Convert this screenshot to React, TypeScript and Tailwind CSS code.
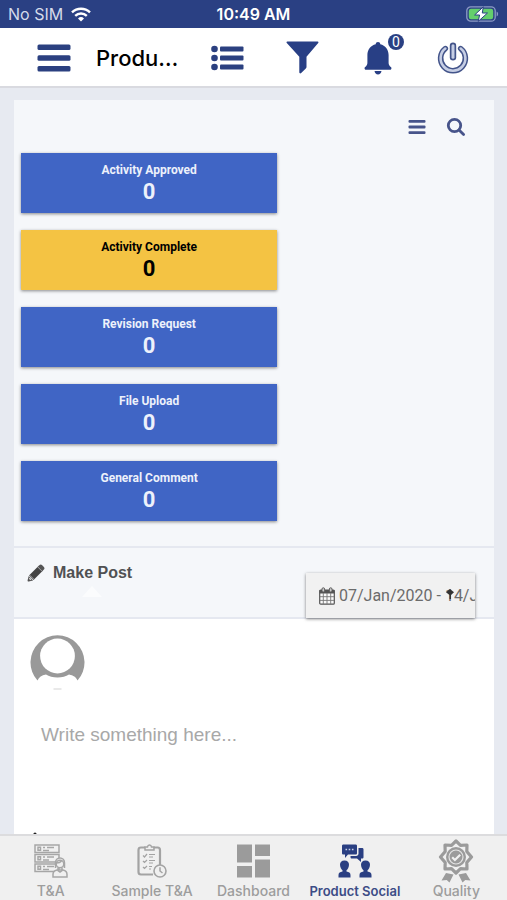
import { useState, type ReactNode } from "react";
import { clsx } from "clsx";

/* ---------- icons ---------- */

function WifiIcon() {
  return (
    <svg width="20" height="15" viewBox="0 0 20 15" fill="none" stroke="#fff" strokeWidth="2.4" aria-hidden>
      <path d="M1 5.4a13 13 0 0 1 18 0" />
      <path d="M4.2 8.8a8.4 8.4 0 0 1 11.6 0" />
      <path d="M10 14.6l-3-3.1a4.3 4.3 0 0 1 6 0z" fill="#fff" stroke="none" />
    </svg>
  );
}

function BatteryIcon() {
  return (
    <svg width="33" height="16" viewBox="0 0 33 16" aria-hidden>
      <rect x="0.8" y="0.8" width="28.4" height="14.4" rx="4" fill="none" stroke="#8d9bc6" strokeWidth="1.3" />
      <rect x="2.8" y="2.8" width="24.4" height="10.4" rx="2.2" fill="#64cf6c" />
      <path d="M30.6 5.5c2 .7 2 4.3 0 5z" fill="#8d9bc6" />
      <path d="M17.3 0.8L8.6 9h5l-1.4 6.4L21.5 7h-5.2z" fill="#fff" stroke="#2a4083" strokeWidth="1" />
    </svg>
  );
}

function MenuIcon() {
  return (
    <svg width="34" height="28" viewBox="0 0 34 28" fill="#2b4080" aria-hidden>
      <rect x="0.5" y="0.5" width="33" height="5.4" rx="1.5" />
      <rect x="0.5" y="11.3" width="33" height="5.4" rx="1.5" />
      <rect x="0.5" y="22.1" width="33" height="5.4" rx="1.5" />
    </svg>
  );
}

function ListIcon() {
  return (
    <svg width="34" height="26" viewBox="0 0 34 26" fill="#2b4080" aria-hidden>
      {[4, 13, 22].map((y) => (
        <g key={y}>
          <circle cx="3.5" cy={y} r="3.3" />
          <rect x="9" y={y - 2.6} width="23.5" height="5.2" rx="1" />
        </g>
      ))}
    </svg>
  );
}

function FunnelIcon() {
  return (
    <svg width="34" height="34" viewBox="0 0 34 34" fill="#283f85" aria-hidden>
      <path d="M1.3 0.5h30.4c.8 0 1 .9.5 1.5L20.5 15.700v10.3c0 .6-.2 1-.7 1.4l-4.6 4.6c-.8.8-1.9.4-1.9-.7V15.700L.8 2C.2 1.4.5.5 1.3.5z" />
    </svg>
  );
}

function BellIcon() {
  return (
    <svg width="28" height="33" viewBox="0 0 28 33" fill="#283f85" aria-hidden>
      <path d="M14 0c1.4 0 2.2.9 2.3 2.3 5 1.2 8.3 5.3 8.3 10.7v7.5c0 2 .6 3.3 2.5 4.8.6.5.4 2.4-.5 2.4H1.4c-.9 0-1.1-1.9-.5-2.4 1.9-1.5 2.5-2.8 2.5-4.8V13c0-5.4 3.3-9.5 8.3-10.7C11.8.9 12.6 0 14 0z" />
      <path d="M10.5 29h7c-.4 2.3-1.6 3.5-3.5 3.5s-3.1-1.2-3.5-3.5z" />
    </svg>
  );
}

function PowerIcon() {
  return (
    <svg width="32" height="32" viewBox="0 0 32 32" fill="none" strokeLinecap="round" aria-hidden>
      <path d="M8.3 6.6a12.4 12.4 0 1 0 15.4 0" stroke="#43548a" strokeWidth="5.6" />
      <path d="M8.3 6.6a12.4 12.4 0 1 0 15.4 0" stroke="#c6cee4" strokeWidth="2.6" />
      <path d="M16 3.8v11.4" stroke="#43548a" strokeWidth="6.4" />
      <path d="M16 3.8v11.4" stroke="#c6cee4" strokeWidth="3" />
    </svg>
  );
}

function LinesIcon() {
  return (
    <svg width="18" height="16" viewBox="0 0 18 16" fill="#47548a" aria-hidden>
      <rect x="0.5" y="1" width="17" height="2.8" rx="1" />
      <rect x="0.5" y="6.6" width="17" height="2.8" rx="1" />
      <rect x="0.5" y="12.2" width="17" height="2.8" rx="1" />
    </svg>
  );
}

function SearchIcon() {
  return (
    <svg width="20" height="20" viewBox="0 0 20 20" fill="none" stroke="#47548a" strokeWidth="2.8" aria-hidden>
      <circle cx="8.5" cy="8.5" r="6.2" />
      <path d="M13 13l4.6 4.6" strokeLinecap="round" />
    </svg>
  );
}

function PencilIcon() {
  return (
    <svg width="18" height="18" viewBox="0 0 18 18" aria-hidden>
      <path d="M2 11.5L11.5 2l4.5 4.5L6.5 16z" fill="#444" />
      <path d="M12.3 1.2c.9-.9 2-.9 2.9 0l1.7 1.7c.8.9.8 1.9 0 2.7l-1.2 1.2-4.6-4.6z" fill="#555" />
      <path d="M1.7 12l4.4 4.4-4.3 1c-.8.2-1.4-.4-1.2-1.2z" fill="#555" />
      <path d="M10.8 3l4.3 4.3M2.8 11.2l4 4" stroke="#b5b6b8" strokeWidth="0.9" />
      <path d="M2.3 14.2l1.6 1.6" stroke="#ddd" strokeWidth="1.3" />
    </svg>
  );
}

function CalendarIcon() {
  return (
    <svg width="16" height="18" viewBox="0 0 16 18" className="shrink-0" aria-hidden>
      <rect x="0.7" y="3" width="14.6" height="14.2" rx="1" fill="#fafafa" stroke="#555" strokeWidth="1.2" />
      <path d="M0.5 3h15v3.5H.5z" fill="#555" />
      <path d="M4.3 6v11M8 6v11M11.7 6v11M1 9.7h14M1 13.4h14" stroke="#777" strokeWidth="0.9" />
      <rect x="3" y="0.8" width="2.6" height="4.2" rx="1.2" fill="#ccc" stroke="#555" strokeWidth="0.9" />
      <rect x="10.4" y="0.8" width="2.6" height="4.2" rx="1.2" fill="#ccc" stroke="#555" strokeWidth="0.9" />
    </svg>
  );
}

function Avatar() {
  return (
    <svg width="56" height="56" viewBox="0 0 56 56" role="img" aria-label="Your avatar">
      <path
        d="M7.5 45.5A27 27 0 1 1 47.5 45.5C46 42 43.5 40.5 39 39.5C36 41.5 32 42.5 27.5 42.5S19 41.5 16 39.5C11.5 40.5 9 42 7.5 45.5z"
        fill="#999"
      />
      <circle cx="27.5" cy="21" r="17.4" fill="#fff" />
      <path d="M23.5 54h8" stroke="#e2e2e2" strokeWidth="1.5" />
    </svg>
  );
}

function ServerUserIcon() {
  return (
    <svg width="34" height="34" viewBox="0 0 34 34" fill="none" stroke="#a6a6a6" strokeWidth="1.5" aria-hidden>
      {[1, 10.5, 20].map((y) => (
        <g key={y}>
          <rect x="1" y={y} width="24" height="7.5" />
          <path d={`M4 ${y + 2.2}h2.5v3H4zM9 ${y + 5.4}h6M9 ${y + 2.4}h2M13 ${y + 2.4}h7`} />
        </g>
      ))}
      <path d="M19 33v-2.5c0-2.5 1.5-4 4-4.5h6c2.5.5 4 2 4 4.5V33z" fill="#f0f0f0" />
      <path d="M21.5 24v-5c0-3 2-5 4.5-5s4.5 2 4.5 5v5" fill="#f0f0f0" />
      <circle cx="26" cy="20" r="3.8" fill="#f0f0f0" />
      <path d="M24 24v2.5l2 1.5 2-1.5V24M22.5 19c2.5 0 4-.7 5-2" />
    </svg>
  );
}

function ClipboardIcon() {
  return (
    <svg width="30" height="34" viewBox="0 0 30 34" fill="none" stroke="#a3a3a3" strokeWidth="1.5" aria-hidden>
      <path d="M8 3.5H4C2.3 3.5 1.5 4.3 1.5 6v22c0 1.7.8 2.5 2.5 2.5h12M16.5 3.5h4C22.2 3.5 23 4.3 23 6v15" strokeWidth="2.2" />
      <path d="M8 6V3h2.5c.2-1.5 1-2 2-2s1.8.5 2 2H17v3z" />
      <path d="M6 11.5L7.5 13 10 10M12 10.5h6M12 13h4M6 17l1.5 1.5L10 16M12 16.5h6M12 19h4M6 23l1.5 1.5L10 22M12 22.5h3M12 25h2" strokeWidth="1.2" />
      <circle cx="23" cy="27" r="6" fill="#f0f0f0" strokeWidth="1.6" />
      <path d="M23 23.2V27l2.5 2" />
    </svg>
  );
}

function DashboardIcon() {
  return (
    <svg width="34" height="34" viewBox="0 0 34 34" fill="#9b9b9b" aria-hidden>
      <path d="M1 0.5h15v18H1zM1 22h15v11.5H1zM19 0.5h15V12H19zM19 15.5h15v18H19z" />
    </svg>
  );
}

function SocialIcon() {
  return (
    <svg width="34" height="34" viewBox="0 0 34 34" fill="#2a3f82" aria-hidden>
      <path d="M5.5.5h12C18.500.5 19 1 19 2v7c0 1-.5 1.5-1.500 1.500H10L7 14v-3.500H5.500C4.500 10.500 4 10 4 9V2C4 1 4.500.5 5.500.5z" />
      <path d="M20.5 4H24c1 0 1.5.5 1.5 1.500V13c0 1-.5 1.500-1.500 1.500h-1V18l-4-3.500h-5c-1 0-1.500-.5-1.500-1.500v-1H18c1.600 0 2.500-.9 2.500-2.500z" />
      <path d="M7.5 5.5h1.6M10.7 5.5h1.6M13.9 5.5h1.6" stroke="#c8d0e6" strokeWidth="1.5" />
      {[6.5, 27.5].map((x) => (
        <g key={x} transform={`translate(${x} 0)`}>
          <path d="M0 16.5c3 0 4.5 1.8 4.5 4.3S3 25.5 2 26.3v1.2c2.3.4 4 1.4 4 3.5v2.5H-6V31c0-2.1 1.7-3.1 4-3.5v-1.2c-1-.8-2.5-3-2.5-5.5S-3 16.5 0 16.5z" />
        </g>
      ))}
    </svg>
  );
}

function BadgeIcon() {
  return (
    <svg width="36" height="44" viewBox="0 0 36 44" aria-hidden>
      <path d="M8 34l-4.5 7.5 5.2-.4 2.8 2.4 4-8zM28 34l4.5 7.5-5.2-.4-2.8 2.4-4-8z" fill="#9b9b9b" />
      <path
        d="M18 2l4.5 4.3 6.5-.3-.2 6.5 4.7 5.5-4.700 5.500.2 6.500-6.500-.3L18 34l-4.500-4.300-6.500.3.200-6.500L2.500 18l4.700-5.500L7 6l6.500.3z"
        fill="#f0f0f0"
        stroke="#9b9b9b"
        strokeWidth="3.2"
        strokeLinejoin="round"
      />
      <circle cx="18" cy="18" r="10" fill="#9b9b9b" />
      <circle cx="18" cy="18" r="7" fill="none" stroke="#e4e4e4" strokeWidth="1.2" />
      <path d="M14.200 18.300l2.700 2.700 5.300-5.300" fill="none" stroke="#f0f0f0" strokeWidth="2.2" />
    </svg>
  );
}

/* ---------- data ---------- */

interface Activity {
  label: string;
  count: number;
  highlight?: boolean;
}

const ACTIVITIES: Activity[] = [
  { label: "Activity Approved", count: 0 },
  { label: "Activity Complete", count: 0, highlight: true },
  { label: "Revision Request", count: 0 },
  { label: "File Upload", count: 0 },
  { label: "General Comment", count: 0 },
];

const TABS: { label: string; icon: ReactNode }[] = [
  { label: "T&A", icon: <ServerUserIcon /> },
  { label: "Sample T&A", icon: <ClipboardIcon /> },
  { label: "Dashboard", icon: <DashboardIcon /> },
  { label: "Product Social", icon: <SocialIcon /> },
  { label: "Quality", icon: <BadgeIcon /> },
];

/* ---------- sections ---------- */

function StatusBar() {
  return (
    <div className="grid h-7 shrink-0 grid-cols-3 items-center bg-[#2a4083] px-2 font-['Inter',sans-serif] text-base text-white">
      <div className="flex items-center gap-2 text-[#d5dbea]">
        <span>No SIM</span>
        <WifiIcon />
      </div>
      <span className="text-center font-semibold">10:49 AM</span>
      <div className="flex justify-end">
        <BatteryIcon />
      </div>
    </div>
  );
}

function Header() {
  const iconButton = "flex h-9 w-9 items-center justify-center";
  return (
    <header className="flex h-[60px] shrink-0 items-center justify-between border-b-2 border-[#d9dae0] bg-white px-9 pt-0.5">
      <div className="flex items-center gap-6">
        <button type="button" aria-label="Menu" className={iconButton}>
          <MenuIcon />
        </button>
        <h1 className="w-[86px] truncate font-['Inter',sans-serif] text-[22px] font-medium text-black">Product Social</h1>
      </div>
      <div className="flex items-center gap-[39px]">
        <button type="button" aria-label="List" className={iconButton}>
          <ListIcon />
        </button>
        <button type="button" aria-label="Filter" className={iconButton}>
          <FunnelIcon />
        </button>
        <button type="button" aria-label="Notifications" className={clsx(iconButton, "relative")}>
          <BellIcon />
          <span className="absolute -top-1.5 -right-2 flex h-4 w-4 items-center justify-center rounded-full bg-[#2a4083] font-['Roboto',sans-serif] text-sm text-white">
            0
          </span>
        </button>
        <button type="button" aria-label="Log out" className={iconButton}>
          <PowerIcon />
        </button>
      </div>
    </header>
  );
}

function ActivityTile({ label, count, highlight }: Activity) {
  return (
    <button
      type="button"
      className={clsx(
        "flex h-[60px] w-[55%] flex-col items-center justify-center pt-0.5 font-['Roboto',sans-serif] font-bold shadow-[0_1px_3px_rgba(0,0,0,0.45)]",
        highlight ? "bg-[#f4c343] text-black" : "bg-[#4065c5] text-[#edf1fb]"
      )}
    >
      <span className="text-xs leading-4">{label}</span>
      <span className="text-[22px] leading-7">{count}</span>
    </button>
  );
}

function MakePost() {
  const [text, setText] = useState("");
  return (
    <>
      <div className="flex h-[73px] shrink-0 items-start justify-between border-y-2 border-[#e5e8f0] pr-[19px] pl-[13px]">
        <div className="flex flex-col items-center">
          <h2 className="flex items-center gap-2 pt-[13px] font-['Liberation_Sans',Arial,sans-serif] text-base font-bold text-[#505153]">
            <PencilIcon />
            Make Post
          </h2>
          <svg width="20" height="12" viewBox="0 0 20 12" className="ml-6" aria-hidden>
            <path d="M0 12L10 1l10 11z" fill="#fbfcfd" />
          </svg>
        </div>
        <button
          type="button"
          className="relative mt-[25px] flex h-[45px] w-[169px] items-center gap-1 overflow-hidden bg-[#f1f1f1] pl-[13px] font-['Roboto',sans-serif] text-base whitespace-nowrap text-[#6b6b6b] shadow-[0_1px_3px_rgba(0,0,0,0.5)]"
        >
          <CalendarIcon />
          <span>07/Jan/2020 - 14/Jan/2020</span>
          <svg width="8" height="10" viewBox="0 0 8 10" className="absolute top-4 left-[140px]" fill="#333" aria-hidden>
            <path d="M4 0l4 3.2L5 6v4H3.5V6L0 3.2z" />
          </svg>
        </button>
      </div>

      <div className="flex-1 bg-white px-4 pt-4">
        <Avatar />
        <textarea
          aria-label="Write something"
          placeholder="Write something here..."
          value={text}
          onChange={(e) => setText(e.target.value)}
          className="mt-6 block h-[116px] w-full resize-none px-[11px] py-2 font-['Liberation_Sans',Arial,sans-serif] text-[19px] leading-6 text-[#444] outline-none placeholder:text-[#a8a8a8]"
        />
        <svg width="6" height="6" viewBox="0 0 6 6" className="ml-0.5" aria-hidden>
          <circle cx="3" cy="3" r="1.6" fill="#222" />
        </svg>
      </div>
    </>
  );
}

function TabBar({ active, onSelect }: { active: string; onSelect: (label: string) => void }) {
  return (
    <nav className="grid h-[66px] shrink-0 grid-cols-5 border-t-2 border-[#dcdcde] bg-[#f0f0f0]">
      {TABS.map((tab) => (
        <button
          key={tab.label}
          type="button"
          onClick={() => onSelect(tab.label)}
          aria-current={tab.label === active ? "page" : undefined}
          className={clsx(
            "flex flex-col items-center gap-1 pt-[5px] font-['Inter',sans-serif] leading-5 whitespace-nowrap",
            tab.label === active ? "text-[13px] font-semibold text-[#3c4c86]" : "text-sm font-medium text-[#9d9d9d]"
          )}
        >
          <span className="flex h-9 items-center justify-center pt-1">{tab.icon}</span>
          {tab.label}
        </button>
      ))}
    </nav>
  );
}

export default function App() {
  const [tab, setTab] = useState("Product Social");
  return (
    <div className="flex h-screen flex-col overflow-hidden bg-[#e7eaf1]">
      <StatusBar />
      <Header />
      <main className="flex min-h-0 flex-1 flex-col overflow-hidden pt-3 pr-[13px] pl-[14px]">
        <section className="flex flex-1 flex-col bg-[#f5f7fa]">
          <div className="flex h-[53px] shrink-0 items-center justify-end gap-5 pr-7">
            <button type="button" aria-label="Options">
              <LinesIcon />
            </button>
            <button type="button" aria-label="Search">
              <SearchIcon />
            </button>
          </div>
          <div className="flex shrink-0 flex-col gap-[17px] px-[7px] pb-[25px]">
            {ACTIVITIES.map((item) => (
              <ActivityTile key={item.label} {...item} />
            ))}
          </div>
          <MakePost />
        </section>
      </main>
      <TabBar active={tab} onSelect={setTab} />
    </div>
  );
}
